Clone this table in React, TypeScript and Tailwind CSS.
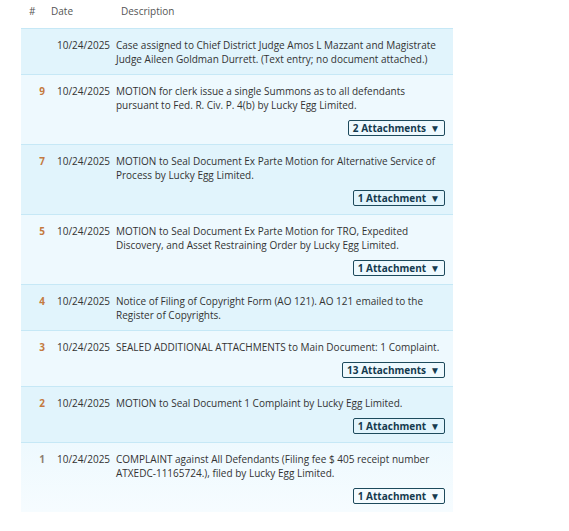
const entries = [
  {
    num: '',
    date: '10/24/2025',
    text: 'Case assigned to Chief District Judge Amos L Mazzant and Magistrate Judge Aileen Goldman Durrett. (Text entry; no document attached.)',
  },
  {
    num: '9',
    date: '10/24/2025',
    text: 'MOTION for clerk issue a single Summons as to all defendants pursuant to Fed. R. Civ. P. 4(b) by Lucky Egg Limited.',
    att: '2 Attachments',
  },
  {
    num: '7',
    date: '10/24/2025',
    text: 'MOTION to Seal Document Ex Parte Motion for Alternative Service of Process by Lucky Egg Limited.',
    att: '1 Attachment',
  },
  {
    num: '5',
    date: '10/24/2025',
    text: 'MOTION to Seal Document Ex Parte Motion for TRO, Expedited Discovery, and Asset Restraining Order by Lucky Egg Limited.',
    att: '1 Attachment',
  },
  {
    num: '4',
    date: '10/24/2025',
    text: 'Notice of Filing of Copyright Form (AO 121). AO 121 emailed to the Register of Copyrights.',
  },
  {
    num: '3',
    date: '10/24/2025',
    text: 'SEALED ADDITIONAL ATTACHMENTS to Main Document: 1 Complaint.',
    att: '13 Attachments',
  },
  {
    num: '2',
    date: '10/24/2025',
    text: 'MOTION to Seal Document 1 Complaint by Lucky Egg Limited.',
    att: '1 Attachment',
  },
  {
    num: '1',
    date: '10/24/2025',
    text: 'COMPLAINT against All Defendants (Filing fee $ 405 receipt number ATXEDC-11165724.), filed by Lucky Egg Limited.',
    att: '1 Attachment',
    muted: true,
  },
]

export default function App() {
  return (
    <div className="w-[569px] h-[531px] bg-white text-[#333] text-[10px] leading-[14px] font-['Open_Sans','Liberation_Sans',sans-serif]">
      <div className="ml-[21px] w-[432px]">
        {/* header */}
        <div className="grid grid-cols-[36px_59px_1fr] h-[28px] items-start pt-[4px] text-[#555] text-[10px]">
          <span className="pl-[8px]">#</span>
          <span className="-ml-[6px]">Date</span>
          <span className="pl-[5px]">Description</span>
        </div>

        {entries.map((e, i) => (
          <div
            key={i}
            className={
              'grid grid-cols-[36px_59px_1fr] border-t border-[#c6e8f6] pt-[9px] pb-[8px] ' +
              (i === entries.length - 1
                ? 'bg-gradient-to-b from-[#eef9fe] to-[#f6fcff]'
                : i % 2 === 0
                ? 'bg-[#e1f4fc]'
                : 'bg-[#eef9fe]')
            }
          >
            <span
              className={
                'text-right pr-[12px] font-bold ' + (e.muted ? 'text-[#8d7d72]' : 'text-[#c47a40]')
              }
            >
              {e.num}
            </span>
            <span>{e.date}</span>
            <div className="pr-[8px]">
              <p>{e.text}</p>
              {e.att && (
                <div className="flex justify-end mt-[8px]">
                  <button className="h-[16px] px-[4px] border border-[#1d4a5c] rounded-[2px] text-[10px] font-bold text-[#143a4e] leading-[14px] flex items-center gap-[4px]">
                    {e.att}
                    <span className="text-[10px]">▼</span>
                  </button>
                </div>
              )}
            </div>
          </div>
        ))}
      </div>
    </div>
  )
}
